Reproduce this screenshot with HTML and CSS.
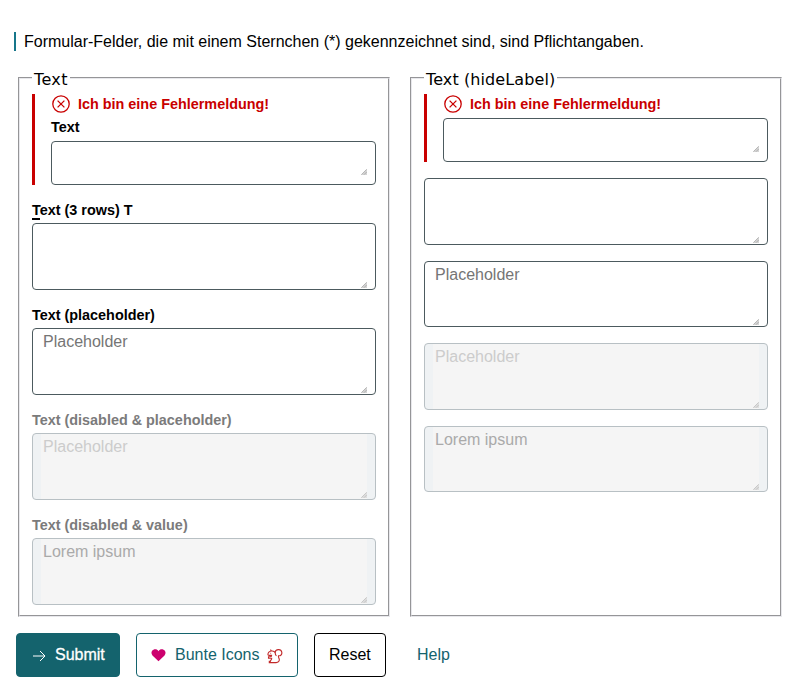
FILE: index.html
```
<!DOCTYPE html>
<html lang="de">
<head>
<meta charset="utf-8">
<title>Textarea</title>
<link rel="stylesheet" href="styles.css">
</head>
<body>
<svg class="defs" aria-hidden="true">
  <symbol id="grip" viewBox="0 0 6 6"><path d="M6 0v6H0z" fill="#d4d4d4"/><path d="M.3 5.7 5.7 .3M3 5.7 5.7 3" stroke="#a0a0a0" stroke-width=".7"/></symbol>
  <symbol id="error" viewBox="0 0 18 18"><circle cx="9" cy="9" r="8.2"/><path d="m5.6 5.6 6.8 6.8m0-6.8-6.8 6.8"/></symbol>
</svg>
<form class="page">
  <p class="hint">Formular-Felder, die mit einem Sternchen (*) gekennzeichnet sind, sind Pflichtangaben.</p>
  <div class="groups">
    <fieldset>
      <legend class="short">Text</legend>
      <div class="field invalid">
        <div class="alert"><svg class="error-icon"><use href="#error"/></svg>Ich bin eine Fehlermeldung!</div>
        <label for="a1">Text</label>
        <div class="box small"><textarea id="a1"></textarea><svg class="grip"><use href="#grip"/></svg></div>
      </div>
      <div class="field">
        <label for="a2"><span class="key">T</span>ext (3 rows) T</label>
        <div class="box"><textarea id="a2"></textarea><svg class="grip"><use href="#grip"/></svg></div>
      </div>
      <div class="field">
        <label for="a3">Text (placeholder)</label>
        <div class="box"><textarea id="a3" placeholder="Placeholder"></textarea><svg class="grip"><use href="#grip"/></svg></div>
      </div>
      <div class="field disabled">
        <label for="a4">Text (disabled &amp; placeholder)</label>
        <div class="box"><textarea id="a4" placeholder="Placeholder" disabled></textarea><svg class="grip"><use href="#grip"/></svg></div>
      </div>
      <div class="field disabled">
        <label for="a5">Text (disabled &amp; value)</label>
        <div class="box"><textarea id="a5" disabled>Lorem ipsum</textarea><svg class="grip"><use href="#grip"/></svg></div>
      </div>
    </fieldset>
    <fieldset>
      <legend class="long">Text (hideLabel)</legend>
      <div class="field invalid">
        <div class="alert"><svg class="error-icon"><use href="#error"/></svg>Ich bin eine Fehlermeldung!</div>
        <div class="box small"><textarea></textarea><svg class="grip"><use href="#grip"/></svg></div>
      </div>
      <div class="field"><div class="box"><textarea></textarea><svg class="grip"><use href="#grip"/></svg></div></div>
      <div class="field"><div class="box"><textarea placeholder="Placeholder"></textarea><svg class="grip"><use href="#grip"/></svg></div></div>
      <div class="field disabled"><div class="box"><textarea placeholder="Placeholder" disabled></textarea><svg class="grip"><use href="#grip"/></svg></div></div>
      <div class="field disabled"><div class="box"><textarea disabled>Lorem ipsum</textarea><svg class="grip"><use href="#grip"/></svg></div></div>
    </fieldset>
  </div>
  <div class="actions">
    <button type="button" class="submit"><svg class="arrow" viewBox="0 0 14 12"><path d="M1 6h12M8 1l5 5-5 5"/></svg>Submit</button>
    <button type="button" class="icons"><svg class="heart" viewBox="0 0 16 14"><path d="M8 13.3 1.5 6.9C-.3 5 .2 1.7 2.6.7 4.6-.2 6.8.4 8 2.3 9.2.4 11.4-.2 13.4.7c2.4 1 2.9 4.3 1.1 6.2z"/></svg>Bunte Icons<svg class="squirrel" viewBox="0 0 16 16"><path d="M3.4 1.6 4.5 3C2.6 3.2 1 4.7.9 6.5c0 .6.6.9 1.3.9h2.4c0 .9-.7 1.3-1.6 1.3H1.5v1.6h3.2c.2 1.3-1.3 1.6-1.4 3.1h-1v1.2h6.8c2 0 3.6-1.5 3.2-3.4-.3-1.3-1.3-2.3-.8-3.5h1.6c1.3-.6 2-2 1.7-3.5-.4-1.8-1.8-2.7-3.4-2.6-1.8.1-3.1 1.1-3.1 2.6v1.2C8.100 3.700 6.500 2.700 4.500 3M8.300 5.400c-.1 1.100.300 1.900 1.200 2.400M3.300 5.300h.800"/></svg></button>
    <button type="button" class="reset">Reset</button>
    <a class="help">Help</a>
  </div>
</form>
</body>
</html>
```
FILE: styles.css
```
* { box-sizing: border-box; }
body { margin: 0; background: #fff; color: #000; font: 16px/20px "Liberation Sans", Arial, sans-serif; }
.defs { display: block; width: 0; height: 0; }
.page { padding: 32px 18px 0 14px; }
.hint { margin: 0; padding-left: 8px; border-left: 2px solid #16768a; height: 19px; line-height: 19px; }
.groups { display: grid; grid-template-columns: 372px 372px; gap: 20px; margin: 17px 0 0 4px; }
fieldset { margin: 0; padding: 6px 12px 9px; border: 2px groove #e8e8ec; min-width: 0; height: 549px; }
legend { padding: 3px 2px 0; font: 16px/17px "DejaVu Sans", Verdana, sans-serif; letter-spacing: .1px; }
.short { letter-spacing: .35px; }
.field { margin-bottom: 16px; }
.invalid { padding-left: 16px; border-left: 3px solid #c90000; }
.alert { display: flex; align-items: center; gap: 8px; height: 24px; padding: 0 0 4px 1px; color: #c90000; font-size: 14.4px; font-weight: bold; }
.error-icon { width: 18px; height: 18px; fill: none; stroke: #c90000; stroke-width: 1.3; }
label { display: block; height: 22.4px; font-size: 14.4px; font-weight: bold; line-height: 19px; }
.invalid label { height: 23px; line-height: 18px; }
.key { box-shadow: 0 1px #000, 0 2px #000; }
.box { position: relative; height: 66.6px; padding: 0 8px; border: 1px solid #4c5a5e; border-radius: 4px; overflow: hidden; }
.small { height: 44px; }
textarea { display: block; width: 100%; height: 100%; margin: 0; padding: 3px 2px 2px; border: 0; background: transparent; resize: none; overflow: hidden; color: #000; font: 16px/20px "Liberation Sans", Arial, sans-serif; }
textarea::placeholder { color: #757575; opacity: 1; }
.grip { position: absolute; right: 8px; bottom: 1px; width: 6px; height: 6px; }
.small .grip { bottom: 9px; }
.disabled label { color: #7b7b7b; }
.disabled .box { background: #eff2f4; border-color: #b8c0c4; }
.disabled textarea { background: #f5f5f5; color: #aaa; }
.disabled textarea::placeholder { color: #ccc; }
.disabled .grip { opacity: .7; }
.actions { display: flex; gap: 16px; margin: 16px 0 0 2px; }
button { display: flex; align-items: center; height: 44px; padding: 0 15px; background: #fff; border: 1px solid #14636d; border-radius: 4px; color: #14636d; font: 16px/20px "Liberation Sans", Arial, sans-serif; }
.submit { width: 104px; gap: 9px; background: #14636d; color: #fff; -webkit-text-stroke: .3px #fff; }
.icons { width: 162px; padding: 0 0 0 14px; }
.reset { width: 72px; padding: 0 0 0 14px; border-color: #000; color: #000; }
.arrow { flex: none; width: 14px; height: 12px; margin-top: 1px; fill: none; stroke: #fff; stroke-width: 1; }
.heart { flex: none; width: 15px; height: 13px; margin: 1px 9px 0 0; fill: #cc006e; }
.squirrel { flex: none; width: 16px; height: 16px; margin: 1px 0 0 7px; fill: none; stroke: #c22a2a; stroke-width: 1.1; }
.help { margin-left: 15px; color: #14636d; line-height: 44px; }
```
